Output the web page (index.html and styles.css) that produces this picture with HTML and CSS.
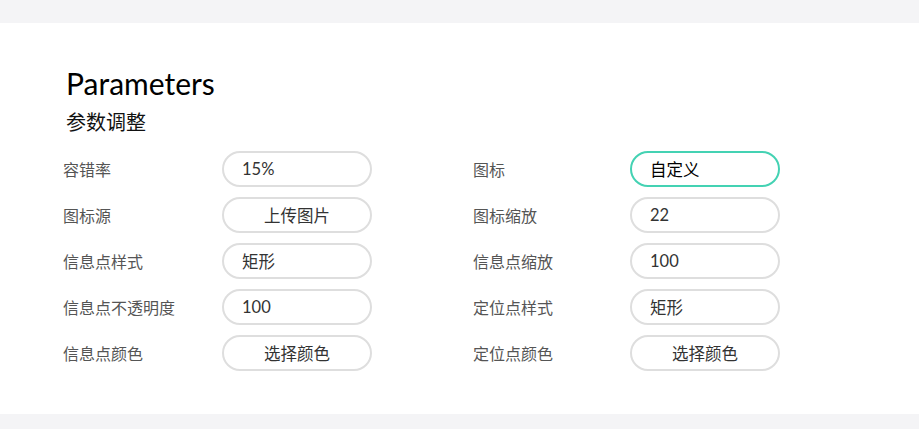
FILE: index.html
```html
<!DOCTYPE html>
<html lang="zh">
<head>
<meta charset="UTF-8">
<title>Parameters</title>
<link rel="stylesheet" href="styles.css">
</head>
<body>

<section class="panel">
    <h2 class="panel-title">Parameters</h2>
    <h3 class="panel-sub">参数调整</h3>

    <div class="params">
        <div class="param">
            <label for="level">容错率</label>
            <input type="text" id="level" class="field" value="15%">
        </div>
        <div class="param">
            <label for="icon">图标</label>
            <input type="text" id="icon" class="field active" value="自定义">
        </div>

        <div class="param">
            <label>图标源</label>
            <button class="field btn">上传图片</button>
        </div>
        <div class="param">
            <label for="iconScale">图标缩放</label>
            <input type="text" id="iconScale" class="field" value="22">
        </div>

        <div class="param">
            <label for="dotType">信息点样式</label>
            <input type="text" id="dotType" class="field" value="矩形">
        </div>
        <div class="param">
            <label for="dotScale">信息点缩放</label>
            <input type="text" id="dotScale" class="field" value="100">
        </div>

        <div class="param">
            <label for="dotOpacity">信息点不透明度</label>
            <input type="text" id="dotOpacity" class="field" value="100">
        </div>
        <div class="param">
            <label for="posType">定位点样式</label>
            <input type="text" id="posType" class="field" value="矩形">
        </div>

        <div class="param">
            <label>信息点颜色</label>
            <button class="field btn">选择颜色</button>
        </div>
        <div class="param">
            <label>定位点颜色</label>
            <button class="field btn">选择颜色</button>
        </div>
    </div>
</section>

</body>
</html>
```

FILE: styles.css
```css
body {
    margin: 0;
    padding: 23px 0 15px;
    background: #f4f4f6;
    font-family: Lato, "Noto Sans CJK SC", sans-serif;
}
.panel {
    background: #fff;
    height: 391px;
    box-sizing: border-box;
    padding: 42px 63px 0;
}
.panel-title {
    margin: 0 0 0 3px;
    font-size: 30px;
    font-weight: 400;
    line-height: 36px;
    color: #000;
}
.panel-sub {
    margin: 7px 0 0 3px;
    font-size: 20px;
    font-weight: 400;
    line-height: 28px;
    color: #111;
}
.params {
    display: grid;
    grid-template-columns: 410px 408px;
    row-gap: 10px;
    margin-top: 15px;
}
.param {
    display: flex;
    align-items: center;
}
.param label {
    width: 159px;
    font-size: 16px;
    color: #555;
}
.param:nth-child(even) label {
    width: 157px;
}
.field {
    width: 150px;
    height: 36px;
    box-sizing: border-box;
    border: 2px solid #dedede;
    border-radius: 18px;
    padding: 0 18px;
    background: #fff;
    font-family: Lato, "Noto Sans CJK SC", sans-serif;
    font-size: 16.5px;
    color: #333;
    outline: none;
}
.field.active {
    border-color: #44d2b3;
    color: #000;
}
.btn {
    text-align: center;
    cursor: pointer;
}
```
